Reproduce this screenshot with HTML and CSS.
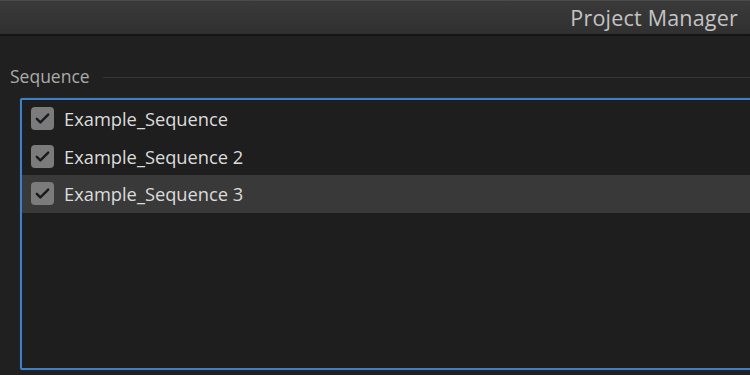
FILE: index.html
```html
<!DOCTYPE html>
<html lang="en">
<head>
  <meta charset="UTF-8" />
  <meta name="viewport" content="width=device-width, initial-scale=1" />
  <title>Project Manager</title>
  <link rel="stylesheet" href="styles.css">
</head>
<body>
  <header class="title-bar">
    <h1>Project Manager</h1>
  </header>

  <main class="panel">
    <div class="group-label">
      <span>Sequence</span>
      <div class="rule"></div>
    </div>

    <ul class="seq-list">
      <li class="seq-row">
        <span class="check">
          <svg viewBox="0 0 24 24" width="17" height="17"><path d="M4 12.5l5 5L20 6.5" /></svg>
        </span>
        <span class="name">Example_Sequence</span>
      </li>
      <li class="seq-row">
        <span class="check">
          <svg viewBox="0 0 24 24" width="17" height="17"><path d="M4 12.5l5 5L20 6.5" /></svg>
        </span>
        <span class="name">Example_Sequence 2</span>
      </li>
      <li class="seq-row selected">
        <span class="check">
          <svg viewBox="0 0 24 24" width="17" height="17"><path d="M4 12.5l5 5L20 6.5" /></svg>
        </span>
        <span class="name">Example_Sequence 3</span>
      </li>
    </ul>
  </main>
</body>
</html>
```

FILE: styles.css
```css
/* Загальне */
html, body {
  height: 100%;
  margin: 0;
  padding: 0;
  overflow: hidden;
  background-color: #202020;
  font-family: "Open Sans", "Noto Sans", sans-serif;
  color: #d8d8d8;
}
body {
  display: flex;
  flex-direction: column;
}

/* Заголовок */
.title-bar {
  flex-shrink: 0;
  height: 36px;
  background: linear-gradient(#3a3a3a, #303030);
  border-top: 1px solid #4a4a4a;
  border-bottom: 2px solid #141414;
  box-sizing: border-box;
  display: flex;
  align-items: center;
  justify-content: flex-end;
  padding-right: 12px;
}
.title-bar h1 {
  margin: 0;
  font-size: 21.5px;
  font-weight: 400;
  color: #c4c4c4;
  letter-spacing: 0.2px;
}

/* Панель */
.panel {
  flex: 1;
  display: flex;
  flex-direction: column;
  padding: 28px 0 5px 10px;
  min-height: 0;
}
.group-label {
  display: flex;
  align-items: center;
  gap: 13px;
  height: 24px;
}
.group-label span {
  font-size: 17.5px;
  color: #ababab;
}
.group-label .rule {
  flex: 1;
  height: 1px;
  background: #363636;
  margin-top: 2px;
}

/* Список */
.seq-list {
  list-style: none;
  flex: 1;
  margin: 10px -2px 0 10px;
  padding: 0;
  border: 2px solid #3f7fc4;
  border-radius: 2px;
  background: #1e1e1e;
  box-shadow: 0 0 2px #1c3a5c;
}
.seq-row {
  display: flex;
  align-items: center;
  height: 37.5px;
  padding-left: 9px;
  gap: 10px;
}
.seq-row.selected {
  background: #393939;
}
.check {
  width: 23px;
  height: 23px;
  border-radius: 4px;
  background: #7b7b7b;
  display: flex;
  align-items: center;
  justify-content: center;
}
.check svg path {
  fill: none;
  stroke: #1a1a1a;
  stroke-width: 3.4;
  stroke-linecap: round;
  stroke-linejoin: round;
}
.seq-row .name {
  font-size: 18.3px;
  color: #dcdcdc;
}
```
